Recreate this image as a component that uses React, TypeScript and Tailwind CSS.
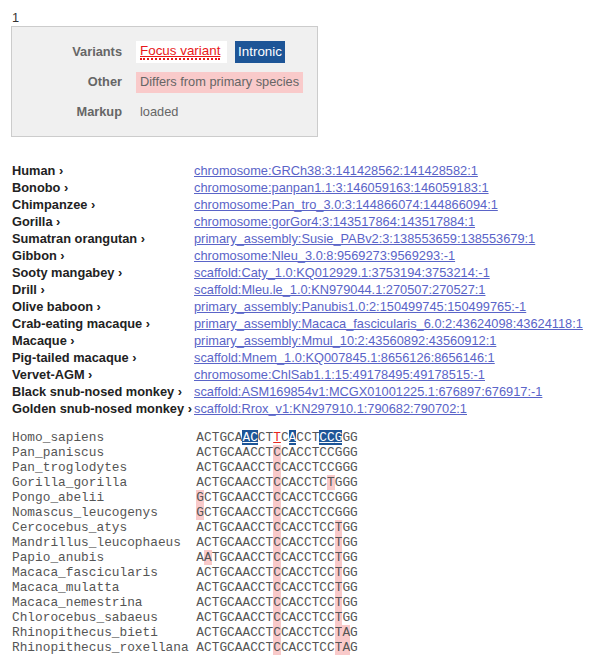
import React from 'react';

const species = [
  { name: 'Human', loc: 'chromosome:GRCh38:3:141428562:141428582:1' },
  { name: 'Bonobo', loc: 'chromosome:panpan1.1:3:146059163:146059183:1' },
  { name: 'Chimpanzee', loc: 'chromosome:Pan_tro_3.0:3:144866074:144866094:1' },
  { name: 'Gorilla', loc: 'chromosome:gorGor4:3:143517864:143517884:1' },
  { name: 'Sumatran orangutan', loc: 'primary_assembly:Susie_PABv2:3:138553659:138553679:1' },
  { name: 'Gibbon', loc: 'chromosome:Nleu_3.0:8:9569273:9569293:-1' },
  { name: 'Sooty mangabey', loc: 'scaffold:Caty_1.0:KQ012929.1:3753194:3753214:-1' },
  { name: 'Drill', loc: 'scaffold:Mleu.le_1.0:KN979044.1:270507:270527:1' },
  { name: 'Olive baboon', loc: 'primary_assembly:Panubis1.0:2:150499745:150499765:-1' },
  { name: 'Crab-eating macaque', loc: 'primary_assembly:Macaca_fascicularis_6.0:2:43624098:43624118:1' },
  { name: 'Macaque', loc: 'primary_assembly:Mmul_10:2:43560892:43560912:1' },
  { name: 'Pig-tailed macaque', loc: 'scaffold:Mnem_1.0:KQ007845.1:8656126:8656146:1' },
  { name: 'Vervet-AGM', loc: 'chromosome:ChlSab1.1:15:49178495:49178515:-1' },
  { name: 'Black snub-nosed monkey', loc: 'scaffold:ASM169854v1:MCGX01001225.1:676897:676917:-1' },
  { name: 'Golden snub-nosed monkey', loc: 'scaffold:Rrox_v1:KN297910.1:790682:790702:1' },
];

const HUMAN = 'ACTGCAACCTTCACCTCCGGG';

const alignment = [
  ['Pan_paniscus', 'ACTGCAACCTCCACCTCCGGG'],
  ['Pan_troglodytes', 'ACTGCAACCTCCACCTCCGGG'],
  ['Gorilla_gorilla', 'ACTGCAACCTCCACCTCTGGG'],
  ['Pongo_abelii', 'GCTGCAACCTCCACCTCCGGG'],
  ['Nomascus_leucogenys', 'GCTGCAACCTCCACCTCCGGG'],
  ['Cercocebus_atys', 'ACTGCAACCTCCACCTCCTGG'],
  ['Mandrillus_leucophaeus', 'ACTGCAACCTCCACCTCCTGG'],
  ['Papio_anubis', 'AATGCAACCTCCACCTCCTGG'],
  ['Macaca_fascicularis', 'ACTGCAACCTCCACCTCCTGG'],
  ['Macaca_mulatta', 'ACTGCAACCTCCACCTCCTGG'],
  ['Macaca_nemestrina', 'ACTGCAACCTCCACCTCCTGG'],
  ['Chlorocebus_sabaeus', 'ACTGCAACCTCCACCTCCTGG'],
  ['Rhinopithecus_bieti', 'ACTGCAACCTCCACCTCCTAG'],
  ['Rhinopithecus_roxellana', 'ACTGCAACCTCCACCTCCTAG'],
];

const blueAt = [6, 7, 12, 16, 17, 18];

function HumanSeq() {
  return (
    <>
      {HUMAN.split('').map((c, i) => {
        if (blueAt.includes(i))
          return (
            <span key={i} className="inline-block bg-[#1d5597] text-white underline">
              {c}
            </span>
          );
        if (i === 10)
          return (
            <span key={i} className="text-[#e8261e] underline">
              {c}
            </span>
          );
        return <span key={i}>{c}</span>;
      })}
    </>
  );
}

function OtherSeq({ seq }: { seq: string }) {
  return (
    <>
      {seq.split('').map((c, i) =>
        c !== HUMAN[i] ? (
          <span key={i} className="inline-block bg-[#f9caca]">
            {c}
          </span>
        ) : (
          <span key={i}>{c}</span>
        )
      )}
    </>
  );
}

export default function App() {
  return (
    <div className="min-h-screen bg-white pt-[10px] px-[11px] font-['Liberation_Sans',Arial,sans-serif] text-[12.8px] text-[#333]">
      <div className="leading-[15px] pl-[1px]">1</div>

      {/* Info box */}
      <div className="mt-[1px] w-[307px] border border-[#cccccc] bg-[#f0f0f0] pt-[14px] pb-[13px]">
        <div className="grid grid-cols-[110px_1fr] gap-x-[14px] gap-y-[8px]">
          <div className="h-[22px] flex items-center justify-end font-bold text-[#666]">Variants</div>
          <div className="h-[22px] flex items-center gap-[8px]">
            <span className="h-[22px] w-[91px] flex items-center bg-white px-[4px] text-[#e8171b] text-[13.4px]">
              <span className="underline border-b-2 border-dotted border-[#e8171b] leading-[14px]">Focus variant</span>
            </span>
            <span className="h-[22px] w-[50px] flex items-center justify-center bg-[#1d5597] text-white text-[13.4px]">Intronic</span>
          </div>

          <div className="h-[22px] flex items-center justify-end font-bold text-[#666]">Other</div>
          <div className="h-[22px] flex items-center">
            <span className="h-[21px] flex items-center bg-[#f9caca] px-[4px] text-[#666]">
              Differs from primary species
            </span>
          </div>

          <div className="h-[22px] flex items-center justify-end font-bold text-[#666]">Markup</div>
          <div className="h-[22px] flex items-center pl-[4px] text-[#666]">loaded</div>
        </div>
      </div>

      {/* Species locations */}
      <div className="mt-[25px] grid grid-cols-[182px_1fr] leading-[17px] pl-[1px]">
        {species.map((s) => (
          <React.Fragment key={s.name}>
            <div className="font-bold text-[#222] whitespace-nowrap">{s.name} ›</div>
            <div className="whitespace-nowrap">
              <a href="#" className="text-[#5a64c8] underline">
                {s.loc}
              </a>
            </div>
          </React.Fragment>
        ))}
      </div>

      {/* Alignment */}
      <div className="mt-[13px] pl-[1px] font-['Liberation_Mono','Courier_New',monospace] text-[12.8px] leading-[15px] text-[#555] whitespace-pre">
        <div>
          {'Homo_sapiens'.padEnd(24, ' ')}
          <HumanSeq />
        </div>
        {alignment.map(([name, seq]) => (
          <div key={name}>
            {name.padEnd(24, ' ')}
            <OtherSeq seq={seq} />
          </div>
        ))}
      </div>
    </div>
  );
}
